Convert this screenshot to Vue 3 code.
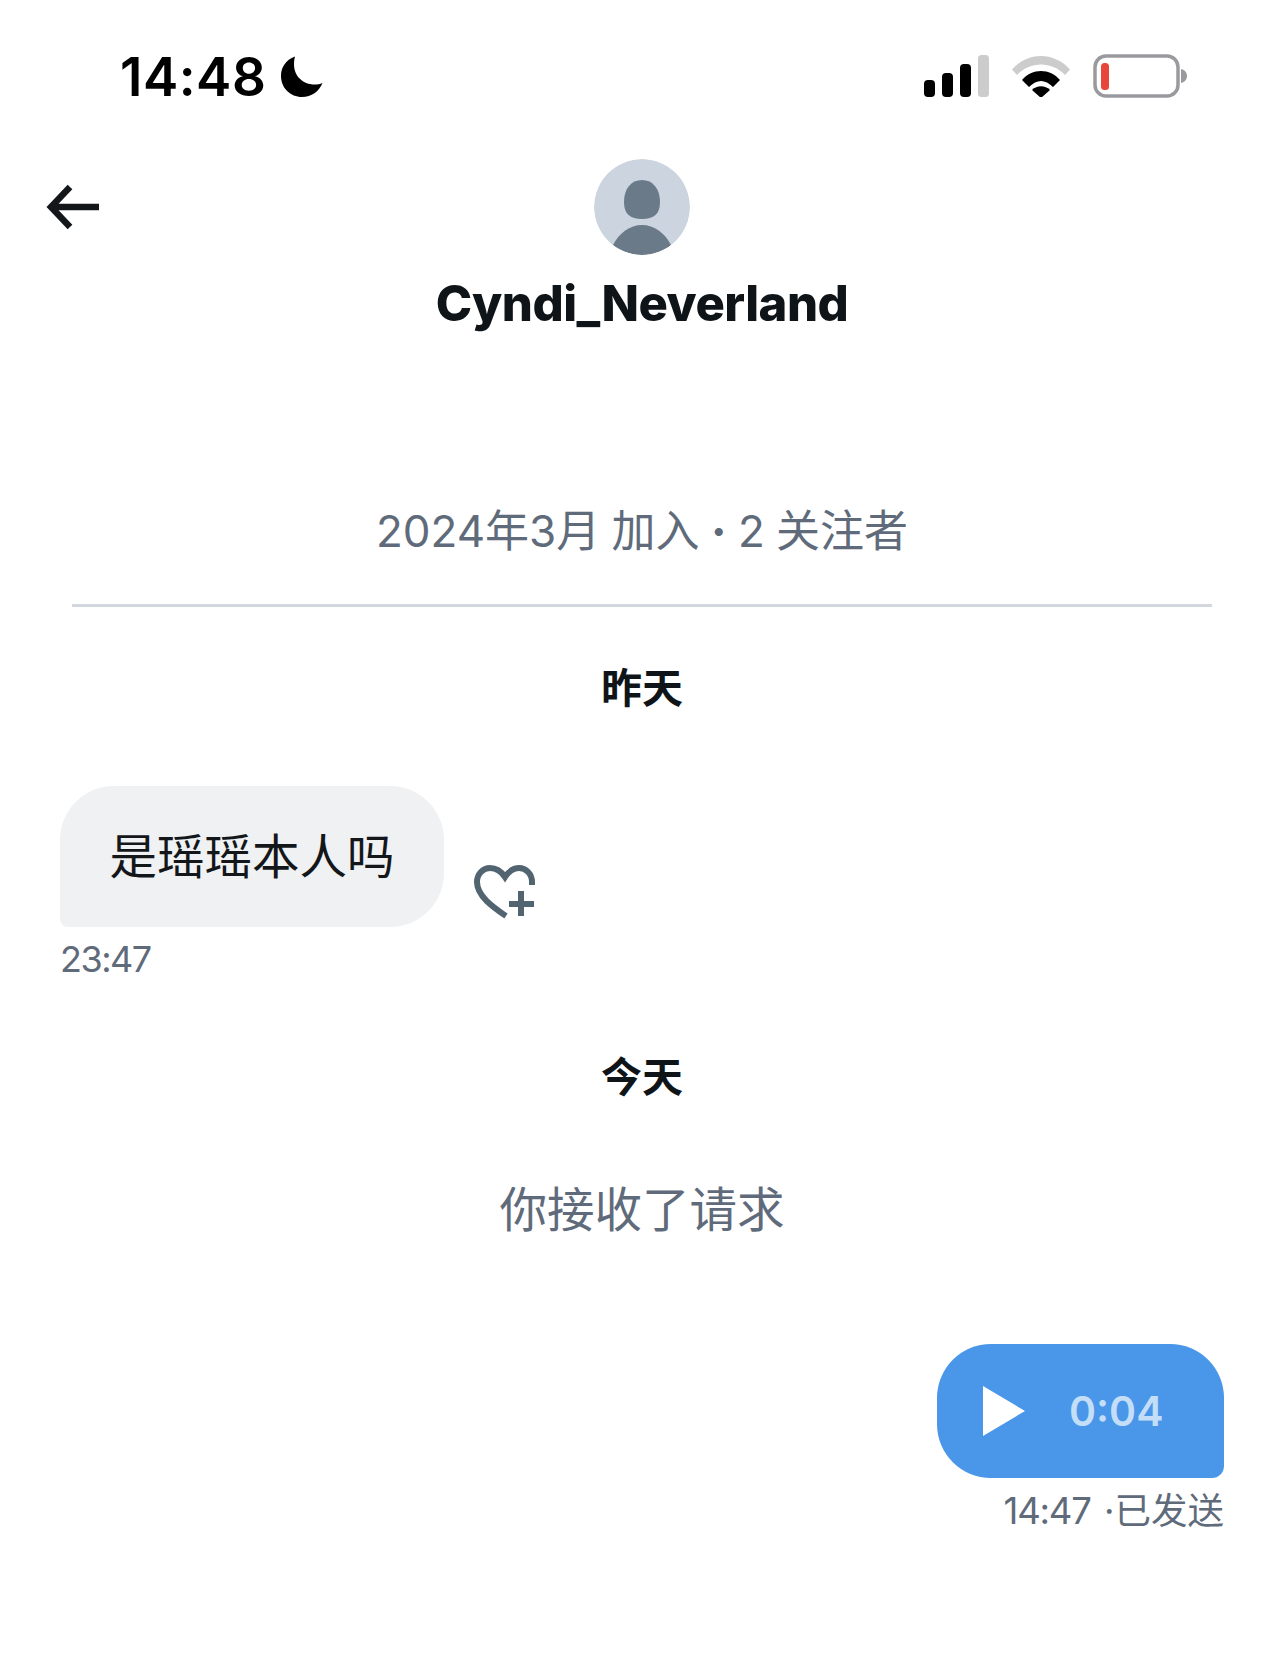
<template>
  <div class="page">
    <div class="status-bar">
      <div class="clock">
        <span>14:48</span>
        <svg class="moon" width="44" height="44" viewBox="0 0 44 44" aria-hidden="true">
          <path d="M15 1.500C5.500 5 1 12.500 1 21c0 12 9.500 21 21 21 9.500 0 17-5.500 20.500-14-2.500 1-5 1.500-8 1.500C23 29.500 14 21 14 9.500 14 6.500 14.300 4 15 1.500Z" fill="#000" />
        </svg>
      </div>
      <div class="status-icons">
        <svg width="65" height="42" viewBox="0 0 65 42" aria-hidden="true">
          <rect x="0" y="25" width="11" height="17" rx="4" fill="#000" />
          <rect x="18" y="18" width="11" height="24" rx="4" fill="#000" />
          <rect x="36" y="9" width="11" height="33" rx="4" fill="#000" />
          <rect x="54" y="0" width="11" height="42" rx="3.500" fill="#cccccc" />
        </svg>
        <svg width="58" height="42" viewBox="0 0 58 42" aria-hidden="true">
          <path d="M0 14.500C16-3.500 42-3.500 58 14.500L53 20C40 6 18 6 5 20Z" fill="#cccccc" />
          <path d="M10 25C20 13 38 13 48 25L41 32C33 24 25 24 17 32Z" fill="#000" />
          <path d="M20 35C25 30 33 30 38 35L29 43Z" fill="#000" />
        </svg>
        <svg width="94" height="44" viewBox="0 0 94 44" aria-hidden="true">
          <rect x="2" y="2" width="83" height="40" rx="11" fill="none" stroke="#9a9a9e" stroke-width="3.500" />
          <rect x="8" y="9" width="8" height="27" rx="3.500" fill="#e8463a" />
          <path d="M88 15C92 16 94 19 94 22S92 28 88 29Z" fill="#9a9a9e" />
        </svg>
      </div>
    </div>

    <header class="nav">
      <button class="back" type="button" aria-label="back">
        <svg width="56" height="50" viewBox="0 0 56 50" aria-hidden="true">
          <path d="M26 5 7 25l19 20M7 25h48" fill="none" stroke="#14171a" stroke-width="6.500" />
        </svg>
      </button>
      <div class="avatar">
        <svg width="96" height="96" viewBox="0 0 96 96" aria-hidden="true">
          <circle cx="48" cy="48" r="48" fill="#ccd5df" />
          <path d="M48 21c11 0 18 9 18 22 0 12-6 17-18 17s-18-5-18-17c0-13 7-22 18-22Z" fill="#6b7a89" />
          <path d="M19 86c6-12 17-20 29-20s23 8 29 20c-8 6-18 10-29 10s-21-4-29-10Z" fill="#6b7a89" />
        </svg>
      </div>
      <h1 class="name">Cyndi_Neverland</h1>
    </header>

    <p class="meta">2024年3月 加入 <span class="dot">·</span> 2 关注者</p>
    <div class="divider"></div>

    <div class="day">昨天</div>

    <div class="incoming">
      <div class="bubble-in">是瑶瑶本人吗</div>
      <svg class="react" width="62" height="54" viewBox="0 0 62 54" aria-hidden="true">
        <path d="M32 51C19 42 3 31 3 17 3 9 9 3 16 3c6 0 11 3 15 9 4-6 8-9 14-9 7 0 13 6 13 14v3" fill="none" stroke="#536471" stroke-width="6" />
        <path d="M47 26v25M35 39h25" fill="none" stroke="#536471" stroke-width="6" />
      </svg>
    </div>
    <div class="time-in">23:47</div>

    <div class="day today">今天</div>
    <p class="accepted">你接收了请求</p>

    <div class="outgoing">
      <div class="bubble-out">
        <svg width="42" height="50" viewBox="0 0 42 50" aria-hidden="true">
          <path d="M0 0 42 25 0 50Z" fill="#fff" />
        </svg>
        <span class="duration">0:04</span>
      </div>
      <div class="time-out"><span class="time-num">14:47</span> ·已发送</div>
    </div>
  </div>
</template>

<script setup>
</script>

<style>
html, body { background: #fff; }
</style>

<style scoped>
.page{width:1284px;height:1664px;overflow:hidden;background:#fff;font-family:Inter,"Noto Sans CJK SC","Noto Sans",sans-serif;color:#0f1419;box-sizing:border-box}
.status-bar{display:flex;justify-content:space-between;align-items:flex-start;padding:46px 97px 0 120px;height:150px;box-sizing:border-box}
.clock{display:flex;align-items:center;gap:14px;font-size:53px;font-weight:600;line-height:62px;color:#000;letter-spacing:.5px}
.moon{margin-top:-1px}
.status-icons{display:flex;align-items:center;gap:23px;padding-top:8px}
.nav{display:grid;justify-items:center;position:relative;margin-top:9px}
.back{position:absolute;left:44px;top:23px;padding:0;border:0;background:none;display:flex}
.avatar{width:96px;height:96px;border-radius:50%;overflow:hidden}
.name{margin:18px 0 0;font-size:49px;line-height:62px;font-weight:800;color:#0f1419;letter-spacing:-.5px}
.meta{margin:167px 0 0;text-align:center;font-size:44px;line-height:58px;color:#5f6b7a;word-spacing:-1px}
.dot{font-weight:800}
.divider{height:3px;margin:44px 72px 0;background:#d3d7de}
.day{margin-top:54px;text-align:center;font-size:41px;line-height:54px;font-weight:700;color:#0f1419}
.incoming{display:flex;align-items:flex-end;gap:30px;margin:71px 0 0 60px}
.bubble-in{width:384px;height:141px;box-sizing:border-box;display:flex;align-items:center;justify-content:center;background:#eff1f3;border-radius:54px 54px 54px 8px;font-size:47.500px;color:#14171a;padding-bottom:6px}
.react{margin-bottom:8px}
.time-in{margin:9px 0 0 60px;font-size:36px;line-height:46px;color:#5f6b7a;letter-spacing:-1.500px}
.today{margin-top:68px}
.accepted{margin:74px 0 0;text-align:center;font-size:47.500px;line-height:64px;color:#5f6b7a}
.outgoing{display:flex;flex-direction:column;align-items:flex-end;margin:102px 60px 0 0}
.bubble-out{width:287px;height:134px;box-sizing:border-box;display:flex;align-items:center;gap:44px;padding:0 0 0 46px;background:#4a96e9;border-radius:54px 54px 12px 54px}
.duration{font-size:41px;line-height:50px;font-weight:600;color:#c4def8}
.time-out{margin-top:10px;font-size:36.500px;line-height:46px;color:#5f6b7a}
.time-num{letter-spacing:-1.200px;margin-right:3px}
</style>
